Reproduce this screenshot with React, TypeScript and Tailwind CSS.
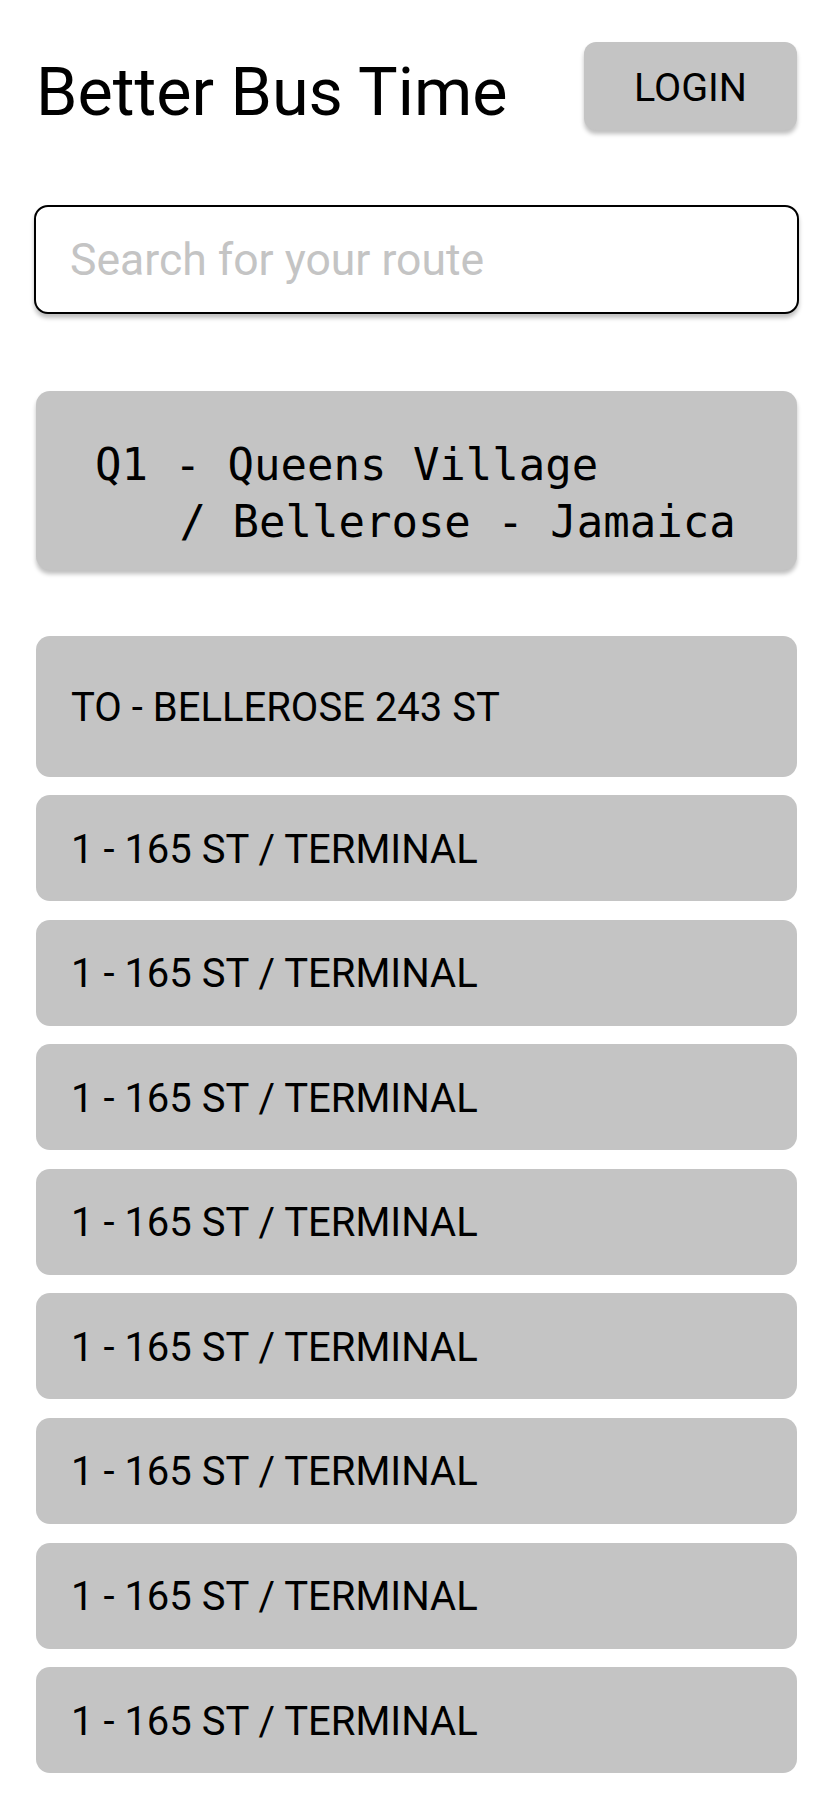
import React from "react";

const stops = Array.from({ length: 8 }, () => "1 - 165 ST / TERMINAL");

export default function App() {
  return (
    <main className="min-h-screen bg-white px-[36px] pt-[42px] pb-[31px] text-black [font-family:Roboto,'Noto_Sans',sans-serif]">
      <div className="flex items-start justify-between">
        <h1 className="mt-[12px] text-[66.5px] leading-[77px] font-normal">Better Bus Time</h1>
        <button className="h-[88px] w-[213px] rounded-[12px] bg-[#c4c4c4] pt-[3px] text-[39.5px] shadow-[0_4px_4px_rgba(0,0,0,0.25)]">
          LOGIN
        </button>
      </div>

      <input
        className="-mx-[2px] mt-[74px] block h-[109px] w-[calc(100%+4px)] rounded-[14px] border-2 border-black bg-white pl-[34px] text-[44.5px] shadow-[0_4px_4px_rgba(0,0,0,0.25)] outline-none placeholder:text-[#c4c4c4]"
        placeholder="Search for your route"
      />

      <div className="mt-[77px] h-[179px] rounded-[14px] bg-[#c4c4c4] pt-[45px] pl-[59px] shadow-[0_4px_4px_rgba(0,0,0,0.25)]">
        <p className="text-[44px] leading-[57px] [font-family:'DejaVu_Sans_Mono',monospace]">
          <span className="block whitespace-pre">Q1 - Queens Village</span>
          <span className="block whitespace-pre pl-[5px]">{"   / Bellerose - Jamaica"}</span>
        </p>
      </div>

      <div className="mt-[66px] flex h-[141px] items-center rounded-[14px] bg-[#c4c4c4] pt-[3px] pl-[35px] text-[40px]">
        TO - BELLEROSE 243 ST
      </div>

      <div className="mt-[18px] flex flex-col gap-[18.6px]">
        {stops.map((s, i) => (
          <div key={i} className="flex h-[106px] items-center rounded-[14px] bg-[#c4c4c4] pt-[3px] pl-[35px] text-[40px]">
            {s}
          </div>
        ))}
      </div>
    </main>
  );
}
